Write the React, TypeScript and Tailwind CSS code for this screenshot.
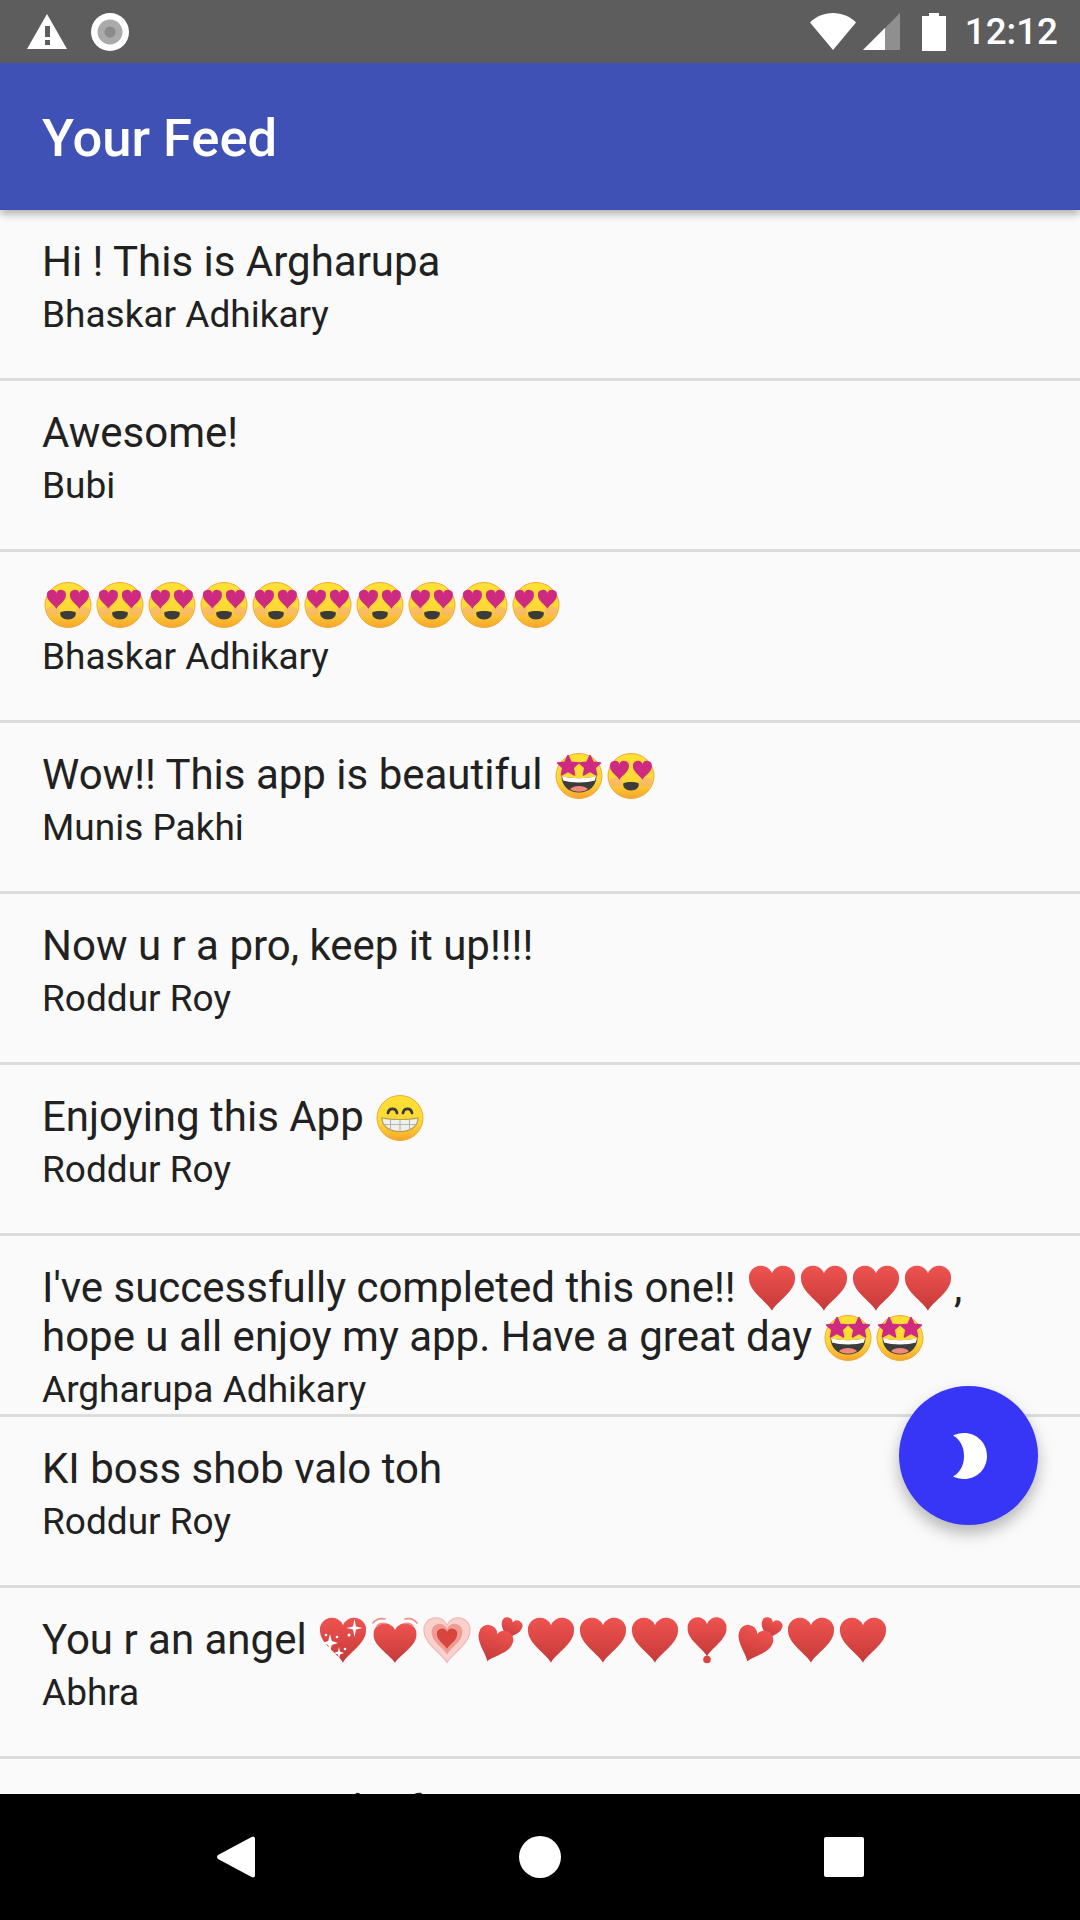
import React from 'react';

const HEART = 'M12 22.500C9.500 18 1 13.200 1 7A5.700 5.700 0 0 1 12 4.300 5.700 5.700 0 0 1 23 7C23 13.200 14.500 18 12 22.500Z';
const BIG_HEART = 'translate(0.900 1.500) scale(2.09 2.05)';

const Glyph: React.FC<{ children: React.ReactNode }> = ({ children }) => (
  <svg viewBox="0 0 52 52" className="inline-block w-[52px] h-[52px] align-[-9px] -my-1">
    {children}
  </svg>
);

const Face = () => <ellipse cx="26" cy="26" rx="23" ry="22.5" fill="url(#face)" stroke="#f2a73b" strokeWidth="1" />;

const HeartEyes = () => (
  <Glyph>
    <Face />
    <ellipse cx="11" cy="32" rx="6.500" ry="4.500" fill="#f6a98a" opacity="0.55" />
    <ellipse cx="41" cy="32" rx="6.500" ry="4.500" fill="#f6a98a" opacity="0.55" />
    <path d={HEART} fill="#cf2a82" transform="translate(4.100 10.400) scale(0.86)" />
    <path d={HEART} fill="#cf2a82" transform="translate(27.100 10.400) scale(0.86)" />
    <path d="M18.500 33C22 31.500 30 31.500 33.500 33 35 37 31 40.500 26 40.500S17 37 18.500 33Z" fill="#3c3c3c" />
  </Glyph>
);

const Star = ({ cx }: { cx: number }) => (
  <path
    transform={`translate(${cx} 16)`}
    d="M0-10.500 3.200-3.800 10.500-3 5.200 1.800 6.600 9 0 5.400-6.600 9-5.200 1.800-10.500-3-3.200-3.800Z"
    fill="#cf2a82"
    stroke="#cf2a82"
    strokeWidth="1.500"
    strokeLinejoin="round"
  />
);

const StarStruck = () => (
  <Glyph>
    <Face />
    <path d="M8.500 26C18 29 34 29 43.500 26 43.500 36 36 42.500 26 42.500S8.500 36 8.500 26Z" fill="#3c3c3c" />
    <path d="M9 26C18 29 34 29 43 26L42 30.500C34 33 18 33 10 30.500Z" fill="#fff" />
    <path d="M17 39C21 35 31 35 35 39 31 42.500 21 42.500 17 39Z" fill="#f08a7a" />
    <Star cx={15} />
    <Star cx={37} />
  </Glyph>
);

const Grin = () => (
  <Glyph>
    <Face />
    <path d="M14 21C15 15.500 22 15.500 23 21M29 21C30 15.500 37 15.500 38 21" fill="none" stroke="#3c3c3c" strokeWidth="2.800" strokeLinecap="round" />
    <path d="M8 26C18 28 34 28 44 26 44 34 37 39.500 26 39.500S8 34 8 26Z" fill="#f0f0ee" stroke="#b3a24a" strokeWidth="1.200" />
    <path d="M8.500 32.500H43.500M16.500 27.500V38M26 28V39.500M35.500 27.500V38" fill="none" stroke="#b5b5ad" strokeWidth="1.100" />
  </Glyph>
);

const RedHeart = () => (
  <Glyph>
    <path d={HEART} fill="url(#heart)" transform={BIG_HEART} />
  </Glyph>
);

const SparklingHeart = () => (
  <Glyph>
    <path d={HEART} fill="url(#heart)" transform={BIG_HEART} />
    <path d="M37.500 4 39 11.500 45.500 13 39 14.500 37.500 22 36 14.500 29.500 13 36 11.500Z" fill="#fff" />
    <path d="M13 19 14.800 26 21 28 14.800 30 13 37 11.200 30 5 28 11.200 26Z" fill="#fff" />
    <path d="M22 32 23 36.500 27 38 23 39.500 22 44 21 39.500 17 38 21 36.500Z" fill="#fff" />
    <circle cx="9" cy="20" r="1.300" fill="#fff" />
    <circle cx="20" cy="22" r="1.300" fill="#fff" />
    <circle cx="32" cy="20" r="1.500" fill="#fff" />
    <circle cx="28" cy="34" r="1.300" fill="#fff" />
  </Glyph>
);

const BeatingHeart = () => (
  <Glyph>
    <path d={HEART} fill="url(#heart)" transform="translate(2.600 7.300) scale(1.95 1.8)" />
    <path d="M4 8C7 4 11 3 16 4M8 11C10 8.500 13 8 16 8.500M48 8C45 4 41 3 36 4M44 11C42 8.500 39 8 36 8.500" fill="none" stroke="#ef8f86" strokeWidth="1.600" strokeLinecap="round" />
  </Glyph>
);

const GrowingHeart = () => (
  <Glyph>
    <path d={HEART} fill="#f9d0cc" stroke="#f1b4ae" strokeWidth="0.500" transform={BIG_HEART} />
    <path d={HEART} fill="#ef9c95" transform="translate(9.200 8) scale(1.4)" />
    <path d={HEART} fill="#d9443f" transform="translate(15 13) scale(0.92)" />
  </Glyph>
);

const TwoHearts = () => (
  <Glyph>
    <path d={HEART} fill="url(#heart)" transform="translate(37.500 14.500) rotate(18) scale(0.95) translate(-12 -12)" />
    <path d={HEART} fill="url(#heart)" transform="translate(20 30.500) rotate(20) scale(1.6) translate(-12 -12)" />
  </Glyph>
);

const HeartExclamation = () => (
  <Glyph>
    <path d={HEART} fill="url(#heart)" transform="translate(4.800 1.300) scale(1.77)" />
    <ellipse cx="26" cy="44.500" rx="3.800" ry="3.800" fill="#d9443f" />
  </Glyph>
);

const feed: { title: React.ReactNode; author: string }[] = [
  { title: 'Hi ! This is Argharupa', author: 'Bhaskar Adhikary' },
  { title: 'Awesome!', author: 'Bubi' },
  {
    title: (
      <>
        {Array.from({ length: 10 }).map((_, i) => (
          <HeartEyes key={i} />
        ))}
      </>
    ),
    author: 'Bhaskar Adhikary',
  },
  {
    title: (
      <>
        Wow!! This app is beautiful <StarStruck />
        <HeartEyes />
      </>
    ),
    author: 'Munis Pakhi',
  },
  { title: 'Now u r a pro, keep it up!!!!', author: 'Roddur Roy' },
  {
    title: (
      <>
        Enjoying this App <Grin />
      </>
    ),
    author: 'Roddur Roy',
  },
  {
    title: (
      <>
        I've successfully completed this one!! <RedHeart />
        <RedHeart />
        <RedHeart />
        <RedHeart />, hope u all enjoy my app. Have a great day <StarStruck />
        <StarStruck />
      </>
    ),
    author: 'Argharupa Adhikary',
  },
  { title: 'KI boss shob valo toh', author: 'Roddur Roy' },
  {
    title: (
      <>
        You r an angel <SparklingHeart />
        <BeatingHeart />
        <GrowingHeart />
        <TwoHearts />
        <RedHeart />
        <RedHeart />
        <RedHeart />
        <HeartExclamation />
        <TwoHearts />
        <RedHeart />
        <RedHeart />
      </>
    ),
    author: 'Abhra',
  },
  { title: 'Your app is a real gift', author: 'Bubi' },
];

const StatusBar = () => (
  <div className="h-[63px] shrink-0 bg-[#5d5d5d] flex items-center justify-between pl-[27px] pr-[22px]">
    <div className="flex items-center gap-[24px]">
      <svg width="40" height="36" viewBox="0 0 40 36">
        <path d="M20 0 40 35H0Z" fill="#fff" />
        <rect x="18" y="12" width="5" height="11" fill="#5d5d5d" />
        <rect x="18" y="26" width="5" height="5" fill="#5d5d5d" />
      </svg>
      <svg width="38" height="38" viewBox="0 0 38 38">
        <circle cx="19" cy="19" r="19" fill="#fff" />
        <circle cx="19" cy="19" r="12.500" fill="#aaaaaa" />
        <circle cx="19" cy="19" r="5.500" fill="#8a8a8a" />
      </svg>
    </div>
    <div className="flex items-center">
      <svg width="46" height="37" viewBox="0 0 46 37">
        <path d="M23 37 0 9.500C6 3.500 14 0 23 0S40 3.500 46 9.500Z" fill="#fff" />
      </svg>
      <svg width="37" height="37" viewBox="0 0 37 37" className="ml-[7px]">
        <path d="M37 0V37H0Z" fill="#8f8f8f" />
        <path d="M22 15V37H0Z" fill="#fff" />
      </svg>
      <svg width="24" height="38" viewBox="0 0 24 38" className="ml-[22px]">
        <path d="M7 0H17V3H24V38H0V3H7Z" fill="#fff" />
      </svg>
      <span className="ml-[19px] text-[36.75px] leading-[43px] font-medium text-white">12:12</span>
    </div>
  </div>
);

const NavBar = () => (
  <div className="h-[126px] shrink-0 bg-black flex items-center">
    <div className="flex items-center w-full pl-[217px]">
      <svg width="38" height="42" viewBox="0 0 38 42">
        <path d="M36 0.500C37.200 0.500 38 1.500 38 2.500V39.500C38 40.500 37.200 41.500 36 41.500 35.500 41.500 35 41.300 34.600 41L1 23C-0.300 22 -0.300 20 1 19L34.600 1C35 0.700 35.500 0.500 36 0.500Z" fill="#fff" />
      </svg>
      <div className="ml-[264px] w-[42px] h-[42px] rounded-full bg-white" />
      <div className="ml-[263px] w-[40px] h-[40px] rounded-[2px] bg-white" />
    </div>
  </div>
);

const App: React.FC = () => (
  <div className="relative h-[1920px] w-[1080px] overflow-hidden flex flex-col bg-[#fafafa] font-[Roboto,sans-serif] text-[#212121]">
    {/* shared paints for the emoji */}
    <svg className="absolute w-0 h-0">
      <defs>
        <linearGradient id="face" x1="0" y1="0" x2="0" y2="1">
          <stop offset="0" stopColor="#fee133" />
          <stop offset="0.6" stopColor="#fdd835" />
          <stop offset="1" stopColor="#f6a52d" />
        </linearGradient>
        <linearGradient id="heart" x1="0" y1="0" x2="0" y2="1">
          <stop offset="0" stopColor="#ef5350" />
          <stop offset="1" stopColor="#c53a38" />
        </linearGradient>
      </defs>
    </svg>

    <StatusBar />
    <div className="relative z-10 h-[147px] shrink-0 bg-[#3f51b5] flex items-center pl-[42px] pt-[3px] shadow-[0_4px_8px_rgba(0,0,0,0.3)]">
      <h1 className="text-[52.5px] leading-[60px] font-medium text-white">Your Feed</h1>
    </div>

    <div className="flex-1 overflow-hidden">
      {feed.map((item, i) => (
        <div key={i} className="min-h-[171px] border-b-[3px] border-[#dcdcdc] pl-[42px] pr-[42px] pt-[27px] pb-[3px]">
          <div className="text-[42px] leading-[49px]">{item.title}</div>
          <div className="text-[37px] leading-[43px] mt-[7px]">{item.author}</div>
        </div>
      ))}
    </div>

    <NavBar />

    <button className="absolute right-[42px] bottom-[395px] w-[139px] h-[139px] rounded-full bg-[#3735f6] flex items-center justify-center shadow-[0_8px_16px_rgba(0,0,0,0.28)]">
      <svg width="34" height="46" viewBox="0 0 34 46" className="ml-[3px]">
        <path d="M0 2.500C3 1 7 0 11 0 24 0 34 10 34 23S24 46 11 46C7 46 3 45 0 43.500 7 40 11 32 11 23S7 6 0 2.500Z" fill="#fff" />
      </svg>
    </button>
  </div>
);

export default App;
